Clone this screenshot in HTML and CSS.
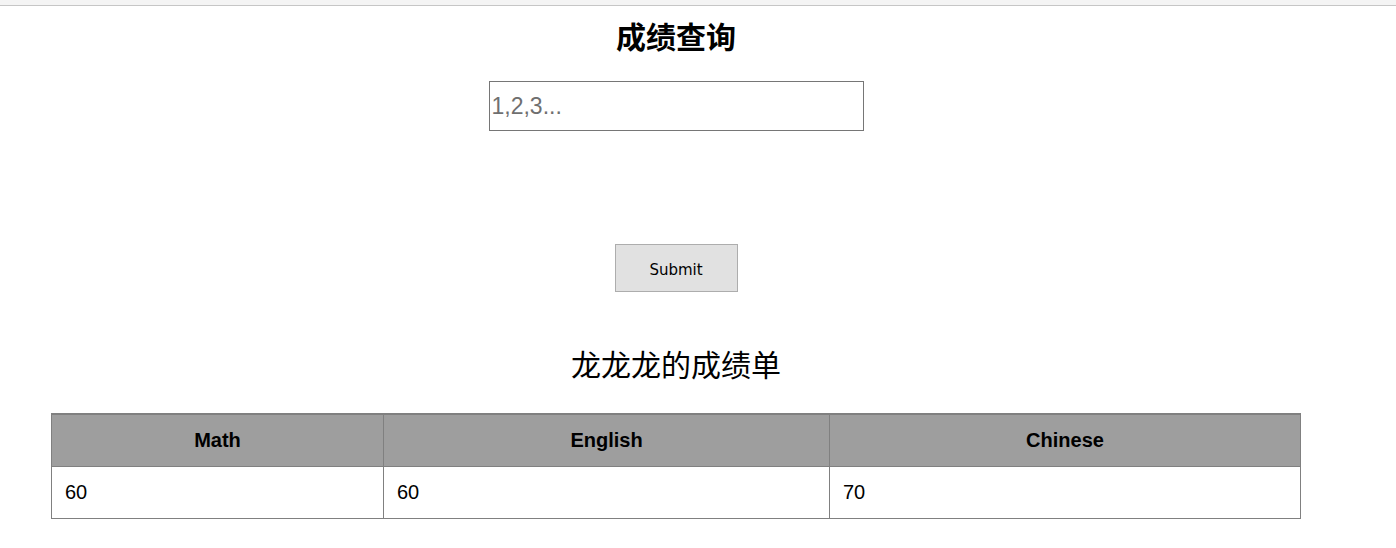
FILE: index.html
```html
<!DOCTYPE html>
<html lang="zh-CN">
<head>
    <meta charset="UTF-8">
    <meta name="viewport" content="width=device-width, initial-scale=1.0">
    <title>成绩查询</title>
    <link rel="stylesheet" href="styles.css">
</head>
<body>
    <div class="topbar"></div>

    <div class="page">
        <h1>成绩查询</h1>

        <form class="query-form" onsubmit="return false;">
            <input type="text" id="ids" placeholder="1,2,3...">
            <button type="submit">Submit</button>
        </form>

        <h2>龙龙龙的成绩单</h2>

        <table class="score-table">
            <thead>
                <tr>
                    <th class="col-math">Math</th>
                    <th class="col-english">English</th>
                    <th class="col-chinese">Chinese</th>
                </tr>
            </thead>
            <tbody>
                <tr>
                    <td>60</td>
                    <td>60</td>
                    <td>70</td>
                </tr>
            </tbody>
        </table>
    </div>
</body>
</html>
```

FILE: styles.css
```css
body {
    font-family: 'Liberation Sans', Arial, 'Noto Sans CJK SC', sans-serif;
    margin: 0;
    padding: 0;
    background-color: #fff;
    color: #000;
}

.topbar {
    height: 5px;
    background-color: #f4f4f4;
    border-bottom: 1px solid #c6c6c6;
}

.page {
    width: 1352px;
    display: flex;
    flex-direction: column;
    align-items: center;
}

h1 {
    font-family: 'Noto Sans CJK SC', sans-serif;
    font-size: 30px;
    font-weight: bold;
    line-height: 40px;
    margin: 9px 0 0;
}

.query-form {
    display: flex;
    flex-direction: column;
    align-items: center;
    margin-top: 26px;
}

.query-form input {
    box-sizing: border-box;
    width: 375px;
    height: 50px;
    border: 1px solid #767676;
    padding: 0 2px;
    font-family: 'Liberation Sans', sans-serif;
    font-size: 23px;
    outline: none;
}

.query-form input::placeholder {
    color: #6f6f6f;
}

.query-form button {
    box-sizing: border-box;
    width: 123px;
    height: 48px;
    margin-top: 113px;
    padding: 4px 0 0;
    background-color: #e1e1e1;
    border: 1px solid #adadad;
    font-family: 'DejaVu Sans', sans-serif;
    font-size: 15px;
    color: #000;
}

h2 {
    font-family: 'Noto Sans CJK SC', sans-serif;
    font-size: 30px;
    font-weight: normal;
    line-height: 40px;
    margin: 51px 0 0;
}

.score-table {
    width: 1250px;
    margin-top: 30px;
    border-collapse: collapse;
    border: 1px solid #808080;
    border-top-width: 2px;
    font-size: 20px;
}

.score-table th,
.score-table td {
    border: 1px solid #808080;
    padding: 0 13px;
}

.score-table th {
    height: 51px;
    background-color: #9e9e9e;
    font-weight: bold;
    text-align: center;
}

.score-table td {
    height: 51px;
    text-align: left;
}

.col-math {
    width: 305px;
}

.col-english {
    width: 419px;
}
```
